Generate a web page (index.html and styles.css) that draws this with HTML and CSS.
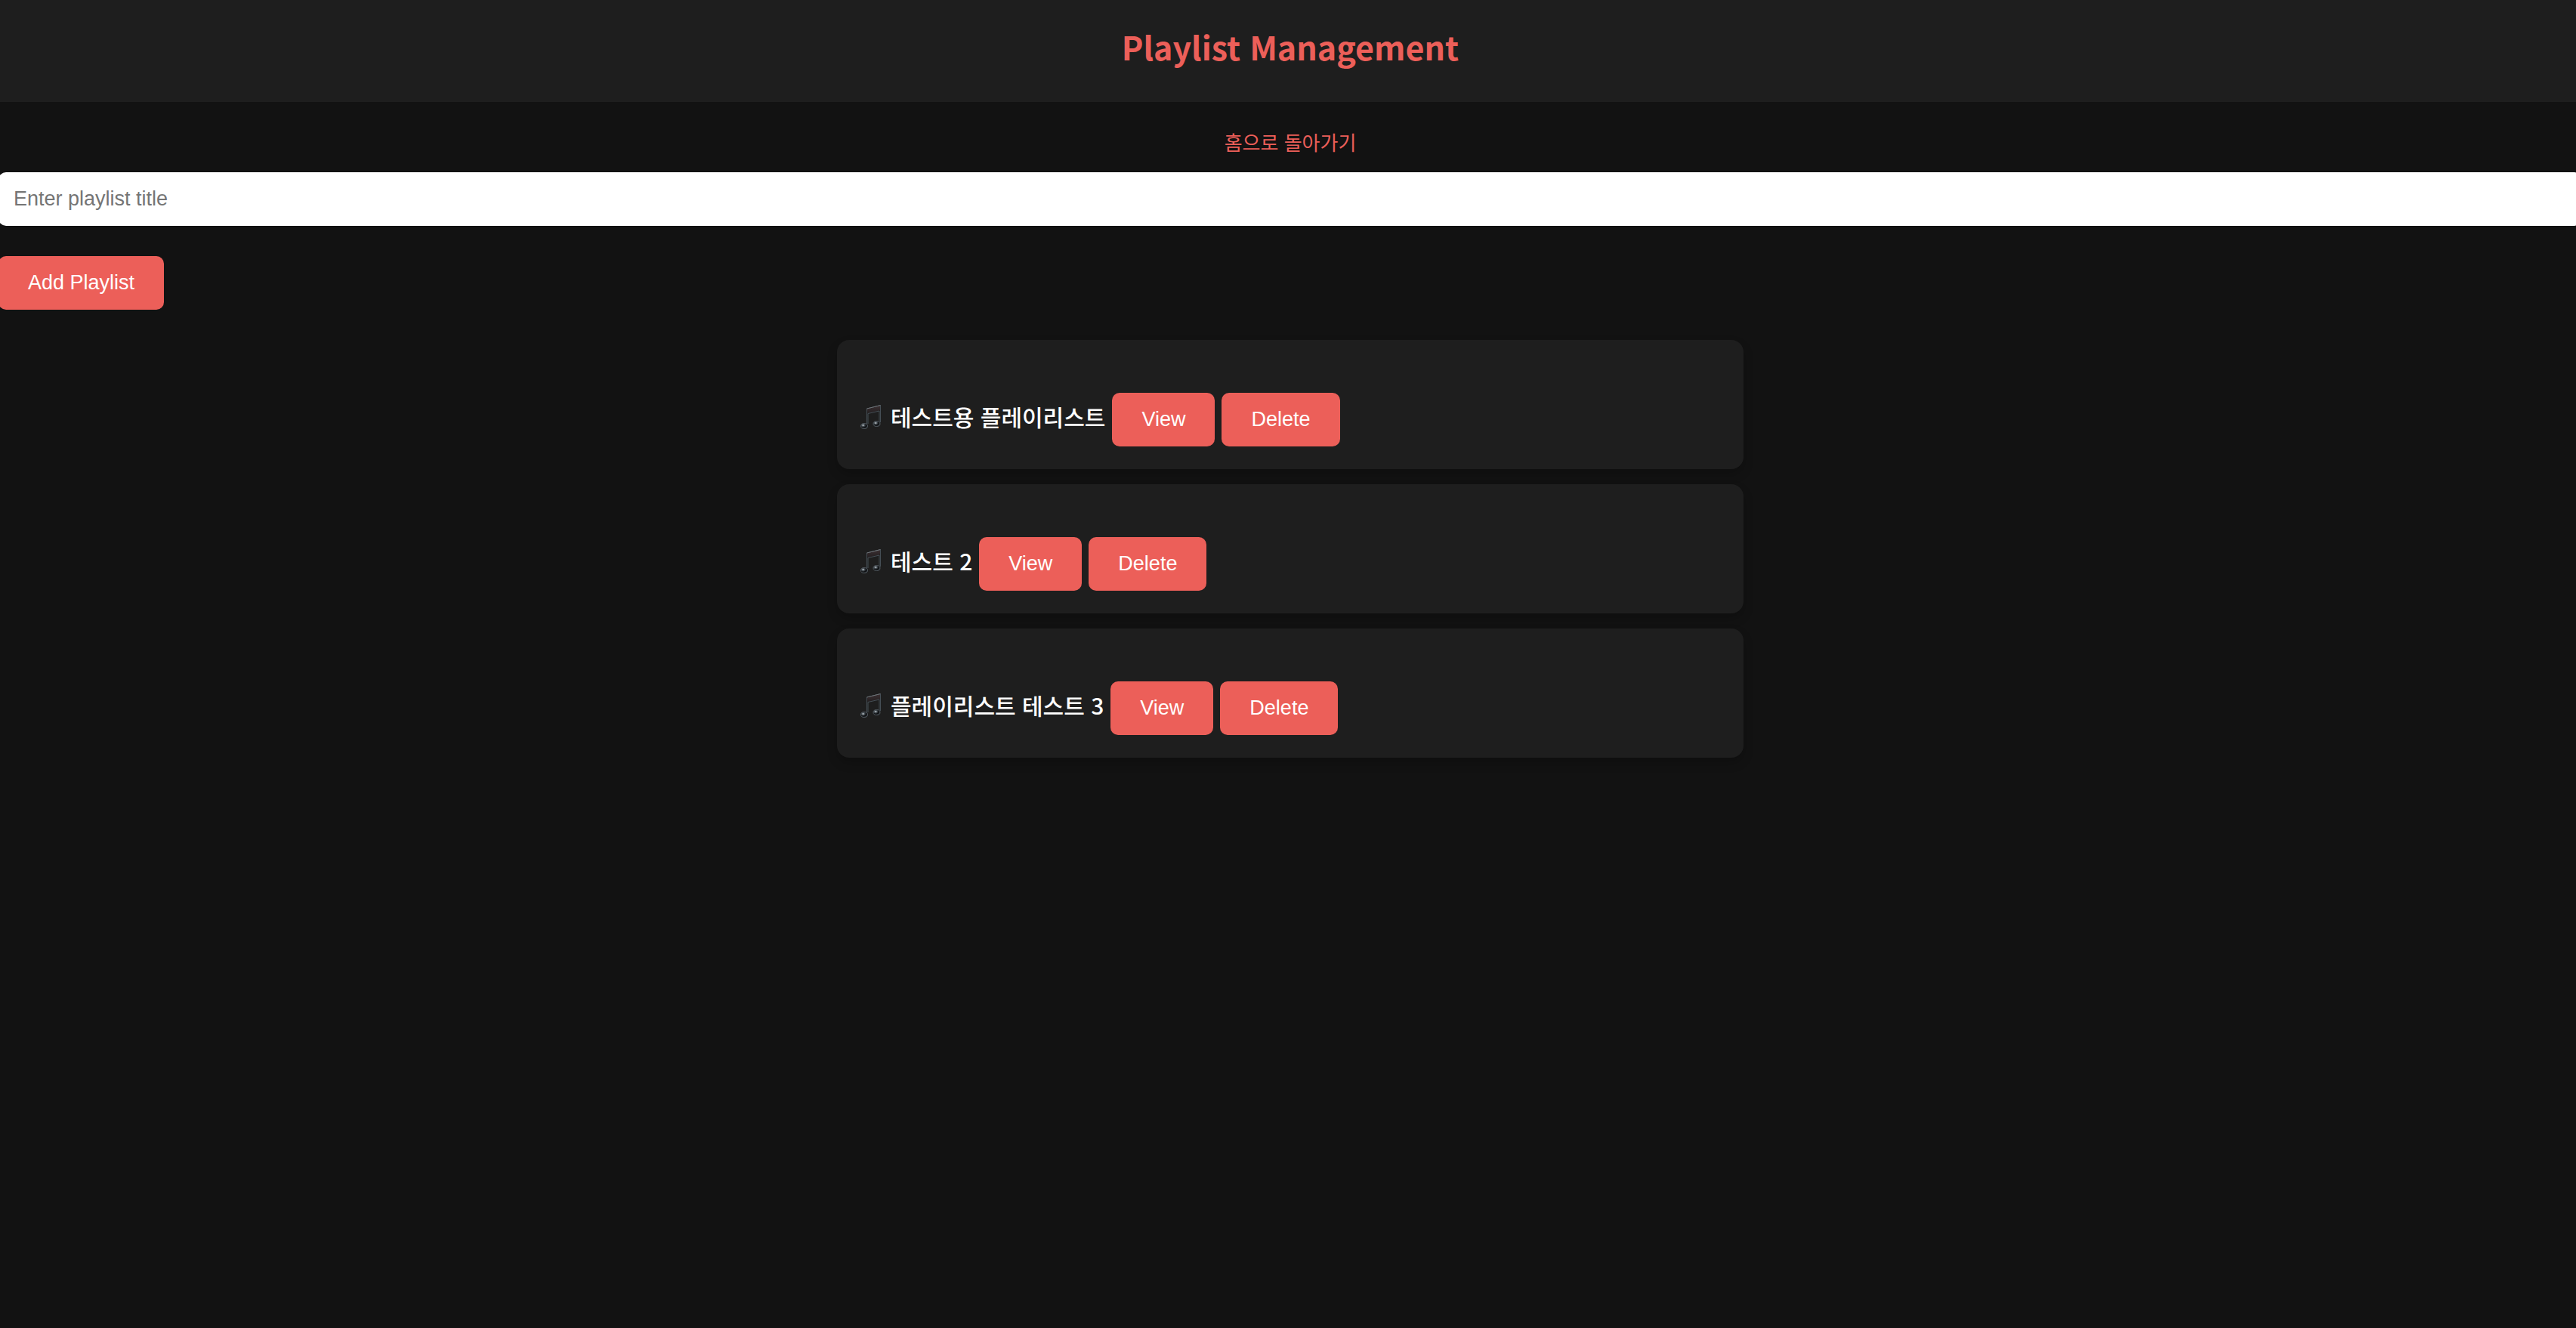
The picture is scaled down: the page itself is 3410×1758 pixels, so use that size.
FILE: index.html
```html
<!DOCTYPE html>
<html lang="ko">
<head>
<meta charset="utf-8">
<title>Playlist Management</title>
<link rel="stylesheet" href="styles.css">
</head>
<body>
<svg class="defs" aria-hidden="true">
  <defs>
    <linearGradient id="beam" x1="0" y1="0" x2="0" y2="1"><stop offset="0" stop-color="#3c3032"/><stop offset="1" stop-color="#241f21"/></linearGradient>
    <radialGradient id="head" cx=".35" cy=".35" r=".7"><stop offset="0" stop-color="#d4dade"/><stop offset=".3" stop-color="#4a5258"/><stop offset=".65" stop-color="#08090b"/><stop offset="1" stop-color="#30363b"/></radialGradient>
    <symbol id="notes" viewBox="-1 0 32 34">
      <path d="M8.500 6 26.500 1.500V8L9.500 12Z" fill="url(#beam)"/>
      <path d="M8.500 27V6L26.500 1.500V24M10 26V12.500L25 9V24" fill="none" stroke="#454e55" stroke-width="1"/>
      <path d="M8.500 6 26.500 1.500" stroke="#6d7276" stroke-width="1"/>
      <ellipse cx="5" cy="29" rx="4.500" ry="3.500" fill="url(#head)" stroke="#596269" stroke-width=".8"/>
      <ellipse cx="21.500" cy="26" rx="4.500" ry="3.500" fill="url(#head)" stroke="#596269" stroke-width=".8"/>
    </symbol>
  </defs>
</svg>
<header class="header"><h1 class="title">Playlist Management</h1></header>
<main class="main">
  <nav class="nav"><a class="home" href="#">홈으로 돌아가기</a></nav>
  <form class="form">
    <input class="field" type="text" placeholder="Enter playlist title" aria-label="Playlist title">
    <button class="button" type="button">Add Playlist</button>
  </form>
  <ul class="list">
    <li class="card"><svg class="notes" aria-hidden="true"><use href="#notes"/></svg><span class="name">테스트용 플레이리스트</span><button class="button" type="button">View</button><button class="button" type="button">Delete</button></li>
    <li class="card"><svg class="notes" aria-hidden="true"><use href="#notes"/></svg><span class="name">테스트 2</span><button class="button" type="button">View</button><button class="button" type="button">Delete</button></li>
    <li class="card"><svg class="notes" aria-hidden="true"><use href="#notes"/></svg><span class="name">플레이리스트 테스트 3</span><button class="button" type="button">View</button><button class="button" type="button">Delete</button></li>
  </ul>
</main>
</body>
</html>
```
FILE: styles.css
```css
* { box-sizing: border-box; }
html { background: #121212; overflow-x: hidden; }
body {
  margin: 0 -8px 0 -2px;
  background: #121212;
  color: #fff;
  font-family: "Noto Sans CJK KR", sans-serif;
}
.defs { position: absolute; width: 0; height: 0; }
.header { padding: 29px 0 42px; background: #1e1e1e; text-align: center; }
.title { margin: 0; color: #ec5f59; font-size: 43px; line-height: 64px; font-weight: 700; }
.nav { padding: 33px 0 20px; text-align: center; font-size: 26px; line-height: 40px; }
.home { color: #ec5f59; text-decoration: none; }
.form { display: flex; flex-direction: column; align-items: flex-start; gap: 40px; }
.field, .button {
  border: 0;
  border-radius: 10px;
  font-family: "Liberation Sans", Arial, sans-serif;
  font-size: 27px;
  line-height: 31px;
}
.field { width: 100%; padding: 20px; background: #fff; color: #111; }
.field::placeholder { color: #757575; opacity: 1; }
.button { padding: 20px 39px; background: #ec5f59; color: #fff; cursor: pointer; }
.list {
  display: flex;
  flex-direction: column;
  gap: 20px;
  max-width: 1200px;
  margin: 40px auto;
  padding: 0;
  list-style: none;
}
.card {
  display: flex;
  align-items: baseline;
  gap: 9px;
  padding: 70px 30px 30px;
  border-radius: 16px;
  background: #1e1e1e;
  box-shadow: 0 7px 14px rgba(0, 0, 0, .2);
}
.notes { align-self: flex-start; width: 32px; height: 34px; margin-top: 15px; }
.name { font-size: 30px; line-height: 40px; font-weight: 500; }
```
